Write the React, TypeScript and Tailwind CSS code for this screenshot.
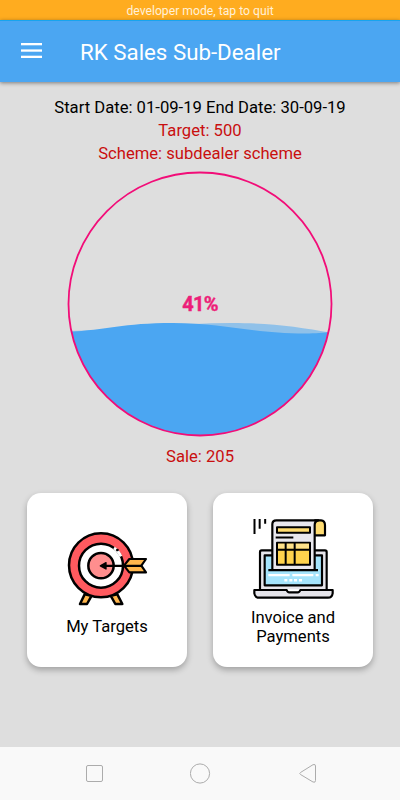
import React from "react";

const TARGET = 500;
const SALE = 205;

interface MenuCardProps {
  label: string;
  icon: React.ReactNode;
}

/* ICONS */
const MenuIcon = () => (
  <svg width="22" height="16" viewBox="0 0 22 16" fill="#fff">
    <rect x="0" y="0" width="21" height="2.3" />
    <rect x="0" y="6.4" width="21" height="2.3" />
    <rect x="0" y="12.7" width="21" height="2.3" />
  </svg>
);

const TargetIcon = () => (
  <svg
    width="80"
    height="81"
    viewBox="19 8 240 243"
    className="overflow-visible"
    stroke="#000"
    strokeWidth="7.5"
    strokeLinejoin="round"
    strokeLinecap="round"
  >
    <path d="M72 207 L58 236 H79 L93 211 Z" fill="#ffb64c" />
    <path d="M170 207 L185 236 H164 L150 211 Z" fill="#ffb64c" />
    <circle cx="121" cy="120" r="96" fill="#ff5a5f" />
    <circle cx="121" cy="121" r="66" fill="#fff" />
    <path
      d="M160 67.5 Q173 76 181 93"
      fill="none"
      stroke="#fff"
      strokeWidth="8"
      strokeLinecap="butt"
    />
    <path d="M170 74 h.5" strokeWidth="8" />
    <circle cx="121" cy="121" r="38" fill="#ff8e8e" />
    <path
      d="M190 121 L206 101 H256 L242 121 L256 141 H206 Z"
      fill="#ffb64c"
      strokeWidth="6.5"
    />
    <path d="M124 121.5 H242" strokeWidth="7" />
    <path d="M119 121.5 L136 112 V131 Z" fill="#000" strokeWidth="4" />
  </svg>
);

const InvoiceIcon = () => (
  <svg
    width="82"
    height="82"
    viewBox="21 24 246 246"
    stroke="#000"
    strokeWidth="6.5"
    strokeLinejoin="round"
  >
    {/* laptop */}
    <path
      d="M45 238 V126 Q45 121 50 121 H240 Q245 121 245 126 V238"
      fill="#e6e5eb"
    />
    <rect x="59" y="136" width="172" height="90" fill="#a5e4fc" />
    <path
      d="M28 240 H125 Q127 247 133 247 H158 Q164 247 166 240 H263 V250 Q261 263 249 263 H42 Q30 263 28 250 Z"
      fill="#e6e5eb"
    />
    {/* paper */}
    <path d="M208 31 H228 Q240 32 240 46 V76 H210" fill="#ffdc71" />
    <path
      d="M82 181 V43 Q82 31 94 31 H220 Q209 33 209 45 V181"
      fill="#e9e8ee"
    />
    <path d="M70 180.5 H219" />
    <rect x="96" y="52" width="99" height="16" fill="#ffdc71" strokeWidth="6" />
    <path d="M92 82.5 H145" strokeWidth="6" />
    <rect x="96" y="98" width="99" height="66" fill="#ffd34d" strokeWidth="6" />
    <rect x="99" y="101" width="93" height="15" fill="#ffe28a" stroke="none" />
    <path d="M96 119 H195 M122 98 V164 M149 98 V164" strokeWidth="6" />
    {/* screen lines */}
    <path
      d="M70 195.5 H134 M142 195.5 H205 M212 195.5 H221"
      stroke="#fff"
      strokeWidth="6.5"
    />
    <path
      d="M118 211 h9 M133 211 h9 M147 211 h9 M162 211 h9"
      stroke="#fff"
      strokeWidth="7.5"
    />
    <path d="M28.5 27 V72 M44 27 V56 M60.5 27 V41" strokeWidth="6" />
  </svg>
);

/* PROGRESS */
const WaveProgress = ({ percent }: { percent: number }) => (
  <div className="relative flex items-center justify-center w-[266px] h-[266px]">
    <svg width="266" height="266" viewBox="0 0 266 266">
      <defs>
        <clipPath id="ring">
          <circle cx="133" cy="133" r="131.5" />
        </clipPath>
      </defs>
      <g clipPath="url(#ring)">
        <path
          d="M0 160 C50 160 110 152 165 152 C205 152 232 156 266 162 V266 H0 Z"
          fill="#90c1e9"
        />
        <path
          d="M0 161 C40 159 55 152 106 152 C155 152 185 162.5 238 162.5 C250 162.5 256 162 266 161 V266 H0 Z"
          fill="#4ba6f2"
        />
      </g>
      <circle
        cx="133"
        cy="133"
        r="131.5"
        fill="none"
        stroke="#f20d78"
        strokeWidth="1.8"
      />
    </svg>
    <span className="absolute inset-0 flex items-center justify-center text-[20px] font-bold tracking-[-0.8px] text-[#ed1e79] [-webkit-text-stroke:0.4px_#ed1e79]">
      {percent}%
    </span>
  </div>
);

const MenuCard = ({ label, icon }: MenuCardProps) => (
  <button className="flex flex-col items-center justify-center w-40 h-[174px] pt-1 rounded-[14px] bg-white shadow-[0_3px_6px_rgba(0,0,0,0.28)]">
    {icon}
    <span className="mt-2 w-[100px] text-center text-[16.6px] leading-[19px]">
      {label}
    </span>
  </button>
);

export default function App() {
  const percent = Math.round((SALE / TARGET) * 100);

  return (
    <div className="flex flex-col w-[400px] h-[800px] overflow-hidden bg-[#dedede] text-black font-[Roboto,sans-serif]">
      {/* DEV BANNER */}
      <div className="h-5 shrink-0 bg-[#ffac1f] text-center text-[12.2px] leading-[22px] text-[#fff0d8]">
        developer mode, tap to quit
      </div>

      {/* HEADER */}
      <header className="flex items-center h-[62px] shrink-0 pl-[21px] border-t border-[#18a4ee] bg-[#4ba6f2] shadow-[0_1px_4px_rgba(0,0,0,0.45)]">
        <button aria-label="Menu" className="-mt-[2px]">
          <MenuIcon />
        </button>
        <h1 className="ml-[37px] pt-[2px] text-[22.3px] text-white">
          RK Sales Sub-Dealer
        </h1>
      </header>

      {/* CONTENT */}
      <main className="flex flex-col flex-1 items-center pt-[14px] text-[16.64px] leading-[23px]">
        <p>Start Date: 01-09-19 End Date: 30-09-19</p>
        <p className="text-[#c90f0f]">Target: {TARGET}</p>
        <p className="text-[#c90f0f]">Scheme: subdealer scheme</p>
        <div className="mt-[6px]">
          <WaveProgress percent={percent} />
        </div>
        <p className="mt-2 text-[#c90f0f]">Sale: {SALE}</p>

        <div className="flex gap-[26px] mt-[25px]">
          <MenuCard label="My Targets" icon={<TargetIcon />} />
          <MenuCard label="Invoice and Payments" icon={<InvoiceIcon />} />
        </div>
      </main>

      {/* NAV BAR */}
      <nav className="flex items-center justify-between h-[53px] shrink-0 pl-[84px] pr-[82px] bg-[#f9f9f9]">
        <svg width="20" height="20" fill="none" stroke="#acacac">
          <rect x="2.5" y="1.5" width="16" height="16" rx="1.5" />
        </svg>
        <svg width="22" height="22" fill="none" stroke="#acacac">
          <circle cx="10" cy="10.5" r="9.6" />
        </svg>
        <svg width="20" height="22" fill="none" stroke="#acacac">
          <path d="M2.5 9.5 L15 1.7 Q17.5 .7 17.5 3 V17.5 Q17.5 20 15 19 L2.5 11.5 Q1 10.5 2.5 9.5 Z" />
        </svg>
      </nav>
    </div>
  );
}
